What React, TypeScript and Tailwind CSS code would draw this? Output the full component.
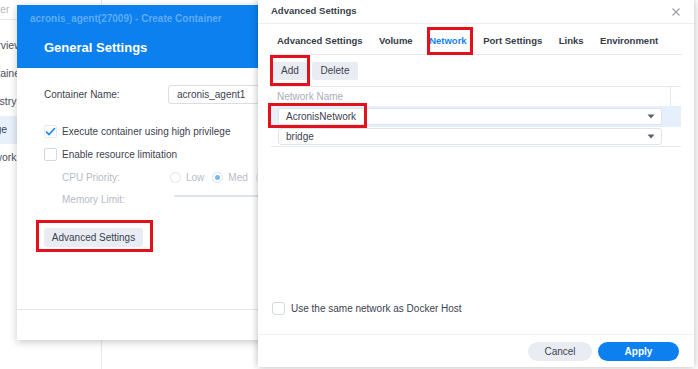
import React from "react";

function Caret() {
  return (
    <svg width="8" height="5" viewBox="0 0 8 5" className="shrink-0">
      <path d="M0.5 0.5 L7.5 0.5 L4 4.5 Z" fill="#5b616b" />
    </svg>
  );
}

function SelectBox({ value }: { value: string }) {
  return (
    <div className="ml-[7px] mr-[19px] flex h-[17px] items-center justify-between rounded-[3px] border border-[#dfe4eb] bg-white pl-[7px] pr-[6px]">
      <span className="text-[10px] text-[#3c4250]">{value}</span>
      <Caret />
    </div>
  );
}

export default function App() {
  const sidebar = ["Overview", "Container", "Registry", "Image", "Network"];
  return (
    <div
      className="relative h-[369px] w-[698px] overflow-hidden bg-white"
      style={{ fontFamily: '"Liberation Sans", Arial, sans-serif' }}
    >
      {/* Base application underneath */}
      <div className="flex h-full">
        <div className="-ml-[58px] flex h-full w-[160px] flex-col border-r border-[#e4e7ec]">
          <div className="flex h-[20px] items-center border-b border-[#e6e9ee] pl-[45px] text-[10px] text-[#b3b8c0]">
            Filter
          </div>
          <div className="h-[12px]" />
          {sidebar.map((s, i) => (
            <div
              key={s}
              className={`flex h-[28px] items-center pl-[36px] text-[10.5px] ${
                i === 3 ? "bg-[#e8f0fb] text-[#3d4450]" : "text-[#4b515c]"
              }`}
            >
              {s}
            </div>
          ))}
        </div>
        <div className="flex-1" />
      </div>

      {/* Window 1: Create Container */}
      <div className="absolute left-[17px] top-[5px] flex h-[335px] w-[320px] flex-col bg-white shadow-[0_2px_8px_rgba(0,0,0,0.22)]">
        <div className="flex h-[63px] flex-col bg-[#0b80ee]">
          <div className="pl-[13px] pt-[8px] text-[10px] font-bold leading-[12px] text-[#5fabf5]">
            acronis_agent(27009) - Create Container
          </div>
          <div className="pl-[27px] pt-[15px] text-[13px] font-bold leading-[16px] text-white">
            General Settings
          </div>
        </div>
        <div className="flex flex-1 flex-col pl-[27px] pt-[17px] text-[10px] text-[#3c4250]">
          <div className="flex h-[19px] items-center">
            <span className="w-[124px]">Container Name:</span>
            <div className="flex h-[19px] flex-1 items-center rounded-[3px] border border-[#d9dee6] pl-[8px]">
              acronis_agent1
            </div>
          </div>
          <div className="mt-[19px] flex h-[16px] items-center">
            <div className="flex h-[13px] w-[13px] items-center justify-center rounded-[2px] border border-[#e6eaf0]">
              <svg width="11" height="9" viewBox="0 0 11 9">
                <path d="M1 4.5 L4 7.5 L10 1" fill="none" stroke="#1d86ef" strokeWidth="1.7" />
              </svg>
            </div>
            <span className="ml-[5px]">Execute container using high privilege</span>
          </div>
          <div className="mt-[7px] flex h-[16px] items-center">
            <div className="h-[13px] w-[13px] rounded-[2px] border border-[#d3d9e1]" />
            <span className="ml-[5px]">Enable resource limitation</span>
          </div>
          <div className="mt-[7px] flex h-[16px] items-center pl-[18px] text-[#b6bcc6]">
            <span className="w-[108px]">CPU Priority:</span>
            <div className="h-[11px] w-[11px] rounded-full border border-[#dfe4ea]" />
            <span className="ml-[5px]">Low</span>
            <div className="ml-[8px] flex h-[11px] w-[11px] items-center justify-center rounded-full border border-[#cfe0f5]">
              <div className="h-[5px] w-[5px] rounded-full bg-[#79b5f3]" />
            </div>
            <span className="ml-[5px]">Med</span>
            <div className="ml-[8px] h-[11px] w-[11px] rounded-full border border-[#dfe4ea]" />
            <span className="ml-[5px]">High</span>
          </div>
          <div className="mt-[6px] flex h-[16px] items-center pl-[18px] text-[#b6bcc6]">
            <span className="w-[112px]">Memory Limit:</span>
            <div className="-mt-[6px] h-[2px] flex-1 rounded bg-[#dfe3e8]" />
          </div>
          <div className="relative mt-[21px] w-[99px]">
            <div className="flex h-[19px] w-[99px] items-center justify-center rounded-[3px] bg-[#e9edf3] text-[#3c4250]">
              Advanced Settings
            </div>
            <div className="absolute -left-[8px] -top-[8px] h-[32px] w-[117px] border-[3px] border-[#e4111c]" />
          </div>
        </div>
        <div className="h-[31px] border-t border-[#e3e6eb]" />
      </div>

      {/* Window 2: Advanced Settings */}
      <div className="absolute left-[258px] top-0 flex h-[367px] w-[436px] flex-col bg-white shadow-[0_0_7px_rgba(0,0,0,0.3)]">
        <div className="flex h-[24px] items-center justify-between border-b border-[#eceef2] pl-[13px] pr-[13px]">
          <span className="text-[9.5px] font-bold text-[#3a3f4b]">Advanced Settings</span>
          <svg width="10" height="10" viewBox="0 0 10 10">
            <path d="M1.5 1.5 L8.5 8.5 M8.5 1.5 L1.5 8.5" stroke="#9aa0a8" strokeWidth="1.2" />
          </svg>
        </div>
        <div className="mx-[12px] flex h-[31px] items-center gap-[16.5px] border-b border-[#e6e9ee] pl-[7px] pt-[4px] text-[9.5px] font-bold text-[#363b47]">
          <span>Advanced Settings</span>
          <span>Volume</span>
          <span className="relative text-[#1583ee]">
            Network
            <span className="absolute -left-[2px] -top-[7px] h-[28px] w-[46px] border-[3px] border-[#e4111c]" />
          </span>
          <span>Port Settings</span>
          <span>Links</span>
          <span>Environment</span>
        </div>
        <div className="mx-[13px] flex h-[32px] items-center gap-[5px] border-b border-[#e6e9ee] pl-[2px] text-[10px] text-[#3c4250]">
          <div className="relative">
            <div className="flex h-[18px] w-[34px] items-center justify-center rounded-[2px] bg-[#e9edf3]">
              Add
            </div>
            <div className="absolute -left-[3px] -top-[7px] h-[31px] w-[40px] border-[3px] border-[#e4111c]" />
          </div>
          <div className="flex h-[18px] w-[46px] items-center justify-center rounded-[2px] bg-[#e9edf3]">
            Delete
          </div>
        </div>
        <div className="mx-[13px] flex flex-col">
          <div className="flex h-[19px]">
            <div className="flex flex-1 items-center pl-[6px] text-[10px] text-[#a7aeb9]">Network Name</div>
            <div className="w-[11px] border-l border-[#e6e9ee]" />
          </div>
          <div className="relative flex h-[21px] flex-col justify-center bg-[#e6f0fc]">
            <SelectBox value="AcronisNetwork" />
            <div className="absolute -left-[3px] -top-[3px] h-[25px] w-[99px] border-[3px] border-[#e4111c]" />
          </div>
          <div className="flex h-[20px] flex-col justify-center border-b border-[#e6e9ee] pb-[1px]">
            <SelectBox value="bridge" />
          </div>
        </div>
        <div className="flex-1" />
        <div className="flex h-[14px] items-center pl-[14px]">
          <div className="h-[13px] w-[13px] rounded-[3px] border border-[#d3d9e1]" />
          <span className="ml-[6px] text-[10px] text-[#3c4250]">Use the same network as Docker Host</span>
        </div>
        <div className="h-[19px]" />
        <div className="flex h-[33px] items-center justify-end gap-[6px] border-t border-[#eef0f3] pr-[15px] pt-[1px] text-[10px]">
          <div className="flex h-[19px] w-[64px] items-center justify-center rounded-full bg-[#e9edf3] text-[#3c4250]">
            Cancel
          </div>
          <div className="flex h-[19px] w-[81px] items-center justify-center rounded-full bg-[#0b80ee] font-bold text-white">
            Apply
          </div>
        </div>
      </div>
    </div>
  );
}
